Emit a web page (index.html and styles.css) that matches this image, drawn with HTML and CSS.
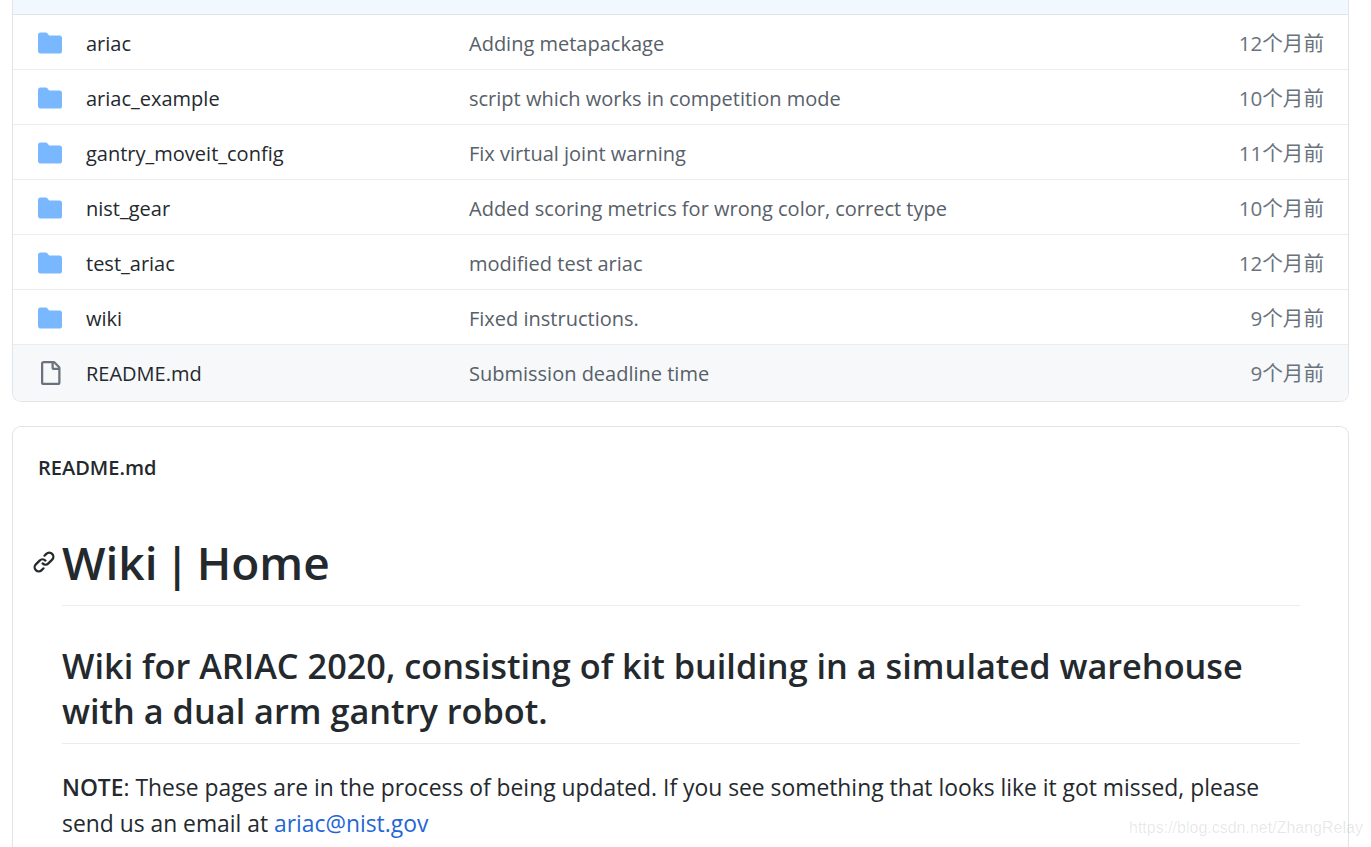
FILE: index.html
```html
<!DOCTYPE html>
<html lang="zh">
<head>
<meta charset="utf-8">
<title>ARIAC</title>
<link rel="stylesheet" href="styles.css">
</head>
<body>
<main class="page">
  <section class="files">
    <div class="commit-band"></div>
    <div class="row"><svg class="icon" viewBox="0 0 16 16"><path class="dir" d="M1.75 1A1.75 1.75 0 0 0 0 2.75v10.5C0 14.22.78 15 1.75 15h12.5A1.75 1.75 0 0 0 16 13.25v-8.5A1.75 1.75 0 0 0 14.25 3H7.5a.25.25 0 0 1-.2-.1l-.9-1.2C6.07 1.26 5.55 1 5 1H1.75Z"/></svg><span class="name">ariac</span><span class="msg">Adding metapackage</span><span class="age">12个月前</span></div>
    <div class="row"><svg class="icon" viewBox="0 0 16 16"><path class="dir" d="M1.75 1A1.75 1.75 0 0 0 0 2.75v10.5C0 14.22.78 15 1.75 15h12.5A1.75 1.75 0 0 0 16 13.25v-8.5A1.75 1.75 0 0 0 14.25 3H7.5a.25.25 0 0 1-.2-.1l-.9-1.2C6.07 1.26 5.55 1 5 1H1.75Z"/></svg><span class="name">ariac_example</span><span class="msg">script which works in competition mode</span><span class="age">10个月前</span></div>
    <div class="row"><svg class="icon" viewBox="0 0 16 16"><path class="dir" d="M1.75 1A1.75 1.75 0 0 0 0 2.75v10.5C0 14.22.78 15 1.75 15h12.5A1.75 1.75 0 0 0 16 13.25v-8.5A1.75 1.75 0 0 0 14.25 3H7.5a.25.25 0 0 1-.2-.1l-.9-1.2C6.07 1.26 5.55 1 5 1H1.75Z"/></svg><span class="name">gantry_moveit_config</span><span class="msg">Fix virtual joint warning</span><span class="age">11个月前</span></div>
    <div class="row"><svg class="icon" viewBox="0 0 16 16"><path class="dir" d="M1.75 1A1.75 1.75 0 0 0 0 2.75v10.5C0 14.22.78 15 1.75 15h12.5A1.75 1.75 0 0 0 16 13.25v-8.5A1.75 1.75 0 0 0 14.25 3H7.5a.25.25 0 0 1-.2-.1l-.9-1.2C6.07 1.26 5.55 1 5 1H1.75Z"/></svg><span class="name">nist_gear</span><span class="msg">Added scoring metrics for wrong color, correct type</span><span class="age">10个月前</span></div>
    <div class="row"><svg class="icon" viewBox="0 0 16 16"><path class="dir" d="M1.75 1A1.75 1.75 0 0 0 0 2.75v10.5C0 14.22.78 15 1.75 15h12.5A1.75 1.75 0 0 0 16 13.25v-8.5A1.75 1.75 0 0 0 14.25 3H7.5a.25.25 0 0 1-.2-.1l-.9-1.2C6.07 1.26 5.55 1 5 1H1.75Z"/></svg><span class="name">test_ariac</span><span class="msg">modified test ariac</span><span class="age">12个月前</span></div>
    <div class="row"><svg class="icon" viewBox="0 0 16 16"><path class="dir" d="M1.75 1A1.75 1.75 0 0 0 0 2.75v10.5C0 14.22.78 15 1.75 15h12.5A1.75 1.75 0 0 0 16 13.25v-8.5A1.75 1.75 0 0 0 14.25 3H7.5a.25.25 0 0 1-.2-.1l-.9-1.2C6.07 1.26 5.55 1 5 1H1.75Z"/></svg><span class="name">wiki</span><span class="msg">Fixed instructions.</span><span class="age">9个月前</span></div>
    <div class="row row-hover"><svg class="icon" viewBox="0 0 16 16"><path class="doc" d="M2 1.75C2 .784 2.784 0 3.75 0h6.586c.464 0 .909.184 1.237.513l2.914 2.914c.329.328.513.773.513 1.237v9.586A1.75 1.75 0 0 1 13.25 16h-9.5A1.75 1.75 0 0 1 2 14.25Zm1.75-.25a.25.25 0 0 0-.25.25v12.5c0 .138.112.25.25.25h9.5a.25.25 0 0 0 .25-.25V6h-2.75A1.75 1.75 0 0 1 9 4.25V1.5Zm6.75.062V4.25c0 .138.112.25.25.25h2.688l-.011-.013-2.914-2.914-.013-.011Z"/></svg><span class="name">README.md</span><span class="msg">Submission deadline time</span><span class="age">9个月前</span></div>
  </section>

  <section class="readme">
    <div class="readme-title">README.md</div>
    <article class="body">
      <h1><svg class="anchor" viewBox="0 0 16 16"><path d="m7.775 3.275 1.25-1.25a3.5 3.5 0 1 1 4.95 4.95l-2.5 2.5a3.5 3.5 0 0 1-4.95 0 .751.751 0 0 1 .018-1.042.751.751 0 0 1 1.042-.018 1.998 1.998 0 0 0 2.83 0l2.5-2.5a2.002 2.002 0 0 0-2.83-2.83l-1.25 1.25a.751.751 0 0 1-1.042-.018.751.751 0 0 1-.018-1.042Zm-4.69 9.64a1.998 1.998 0 0 0 2.83 0l1.25-1.25a.751.751 0 0 1 1.042.018.751.751 0 0 1 .018 1.042l-1.25 1.25a3.5 3.5 0 1 1-4.95-4.95l2.5-2.5a3.5 3.5 0 0 1 4.95 0 .751.751 0 0 1-.018 1.042.751.751 0 0 1-1.042.018 1.998 1.998 0 0 0-2.83 0l-2.5 2.5a1.998 1.998 0 0 0 0 2.83Z"/></svg>Wiki | Home</h1>
      <h2>Wiki for ARIAC 2020, consisting of kit building in a simulated warehouse with a dual arm gantry robot.</h2>
      <p><strong>NOTE</strong>: These pages are in the process of being updated. If you see something that looks like it got missed, please send us an email at <a href="#">ariac@nist.gov</a></p>
    </article>
  </section>
</main>
<div class="watermark">https://blog.csdn.net/ZhangRelay</div>
</body>
</html>
```
FILE: styles.css
```css
html, body {
  margin: 0;
  height: 847px;
  overflow: hidden;
  background: #fff;
}
body {
  font-family: "Open Sans", "Noto Sans CJK SC", sans-serif;
  color: #24292e;
  font-size: 21px;
}
.page {
  padding: 0 22px 0 12px;
}
.files {
  border: 1px solid #e1e4e8;
  border-top: 0;
  border-radius: 0 0 9px 9px;
  overflow: hidden;
}
.commit-band {
  height: 14px;
  background: #f1f8ff;
  border-bottom: 1px solid #e1e4e8;
  box-sizing: content-box;
}
.row {
  display: flex;
  align-items: center;
  height: 52px;
  padding: 2px 24px 0 25px;
  border-top: 1px solid #eaecef;
}
.row:nth-child(2) {
  border-top: 0;
}
.row-hover {
  background: #f6f8fa;
  height: 56px;
  padding-top: 0;
}
.icon {
  width: 24px;
  height: 24px;
  flex: none;
  margin-right: 24px;
}
.dir {
  fill: #79b8ff;
}
.doc {
  fill: #6a737d;
}
.name {
  width: 383px;
  flex: none;
  font-size: 20px;
  white-space: nowrap;
}
.msg {
  flex: 1;
  font-size: 20px;
  color: #586069;
  white-space: nowrap;
}
.age {
  font-size: 20.6px;
  line-height: 24px;
  color: #6a737d;
  white-space: nowrap;
}
.readme {
  box-sizing: border-box;
  margin-top: 24px;
  border: 1px solid #e1e4e8;
  border-bottom: 0;
  border-radius: 9px 9px 0 0;
  padding: 0 48px 0 24px;
  height: 421px;
  overflow: hidden;
}
.readme-title {
  padding: 27px 0 0 1px;
  line-height: 28px;
  font-size: 20px;
  font-weight: 600;
}
.body {
  padding-left: 25px;
}
h1 {
  position: relative;
  margin: 45px 0 0;
  font-size: 46px;
  font-weight: 600;
  line-height: 71px;
  padding-bottom: 7px;
  border-bottom: 1px solid #eaecef;
  word-spacing: -5px;
}
.anchor {
  position: absolute;
  left: -30px;
  top: 23px;
  width: 24px;
  height: 24px;
  fill: #24292e;
}
h2 {
  margin: 37px 0 0;
  font-size: 34.3px;
  font-weight: 600;
  line-height: 45px;
  padding-bottom: 10px;
  border-bottom: 1px solid #eaecef;
}
p {
  margin: 26px 0 0;
  font-size: 22.85px;
  line-height: 36px;
}
strong {
  font-weight: 600;
}
a {
  color: #1f66d6;
  text-decoration: none;
}
.watermark {
  position: absolute;
  left: 1129px;
  top: 819px;
  font-family: "Liberation Sans", sans-serif;
  font-size: 16px;
  color: rgba(0, 0, 0, 0.1);
  white-space: nowrap;
}
```
